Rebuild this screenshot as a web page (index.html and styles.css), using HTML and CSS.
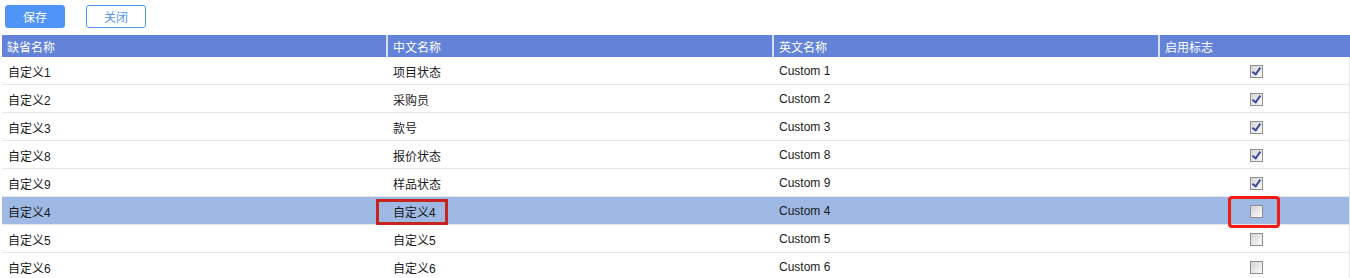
FILE: index.html
```html
<!DOCTYPE html>
<html>
	<head>
		<meta charset="utf8">
		<title>自定义字段</title>
		<link rel="stylesheet" href="styles.css">
	</head>
	<body>
		<div class="toolbar">
			<button class="btn btn_save">保存</button>
			<button class="btn btn_close">关闭</button>
		</div>
		<table class="grid">
			<thead>
				<tr>
					<th class="c1">缺省名称</th>
					<th class="c2">中文名称</th>
					<th class="c3">英文名称</th>
					<th class="c4">启用标志</th>
				</tr>
			</thead>
			<tbody>
				<tr><td>自定义1</td><td>项目状态</td><td>Custom 1</td><td class="flag"><span class="chk on"></span></td></tr>
				<tr><td>自定义2</td><td>采购员</td><td>Custom 2</td><td class="flag"><span class="chk on"></span></td></tr>
				<tr><td>自定义3</td><td>款号</td><td>Custom 3</td><td class="flag"><span class="chk on"></span></td></tr>
				<tr><td>自定义8</td><td>报价状态</td><td>Custom 8</td><td class="flag"><span class="chk on"></span></td></tr>
				<tr><td>自定义9</td><td>样品状态</td><td>Custom 9</td><td class="flag"><span class="chk on"></span></td></tr>
				<tr class="selected"><td>自定义4</td><td class="mark_text">自定义4</td><td>Custom 4</td><td class="flag"><span class="chk mark_box"></span></td></tr>
				<tr><td>自定义5</td><td>自定义5</td><td>Custom 5</td><td class="flag"><span class="chk"></span></td></tr>
				<tr><td>自定义6</td><td>自定义6</td><td>Custom 6</td><td class="flag"><span class="chk"></span></td></tr>
			</tbody>
		</table>
	</body>
</html>
```

FILE: styles.css
```css
body{
	margin:0;
	font-family:"Liberation Sans","Noto Sans CJK SC",sans-serif;
	font-size:12px;
	color:#1a1a1a;
	background:#fff;
}
.toolbar{
	display:flex;
	gap:21px;
	padding:5px 0 0 5px;
	height:30px;
	box-sizing:border-box;
}
.btn{
	width:60px;
	height:23px;
	border-radius:3px;
	font-family:inherit;
	font-size:12px;
	padding:0;
	cursor:pointer;
}
.btn_save{
	background:#4f94f6;
	border:1px solid #4f94f6;
	color:#fff;
}
.btn_close{
	background:#fff;
	border:1px solid #4f94f6;
	color:#4f94f6;
}
.grid{
	margin:5px 0 0 2px;
	width:1348px;
	border-collapse:collapse;
	table-layout:fixed;
}
.grid th{
	height:22px;
	padding:0 0 0 5px;
	background:#6383d9;
	color:#fff;
	font-weight:normal;
	text-align:left;
	border-left:2px solid #d7dcea;
}
.grid th.c1{
	width:379px;
	border-left:0;
}
.grid th.c2,.grid th.c3{
	width:379px;
}
.grid td{
	height:26px;
	padding:1px 0 0 6px;
	border-bottom:1px solid #e6e6e6;
	white-space:nowrap;
}
.grid td.flag{
	text-align:center;
	padding-left:4px;
	border-right:1px solid #e6e6e6;
}
.grid tr.selected td{
	background:#9eb9e4;
}
.chk{
	display:inline-block;
	width:11px;
	height:11px;
	border:1px solid #8e8e8e;
	background:linear-gradient(135deg,#d4d4d8,#fbfbfb);
	vertical-align:middle;
	position:relative;
}
.chk.on::before{
	content:"";
	position:absolute;
	left:3px;
	top:0px;
	width:3px;
	height:7px;
	border:solid #3a4a9e;
	border-width:0 2px 2px 0;
	transform:rotate(35deg);
}
/* 标注框 */
.mark_text{
	position:relative;
}
.mark_text::after{
	content:"";
	position:absolute;
	left:-11px;
	top:2px;
	width:66px;
	height:20px;
	border:3px solid #c8231c;
}
.mark_box::after{
	content:"";
	position:absolute;
	left:-23px;
	top:-10px;
	width:46px;
	height:26px;
	border:3px solid #f21a12;
	border-radius:4px;
}
```
